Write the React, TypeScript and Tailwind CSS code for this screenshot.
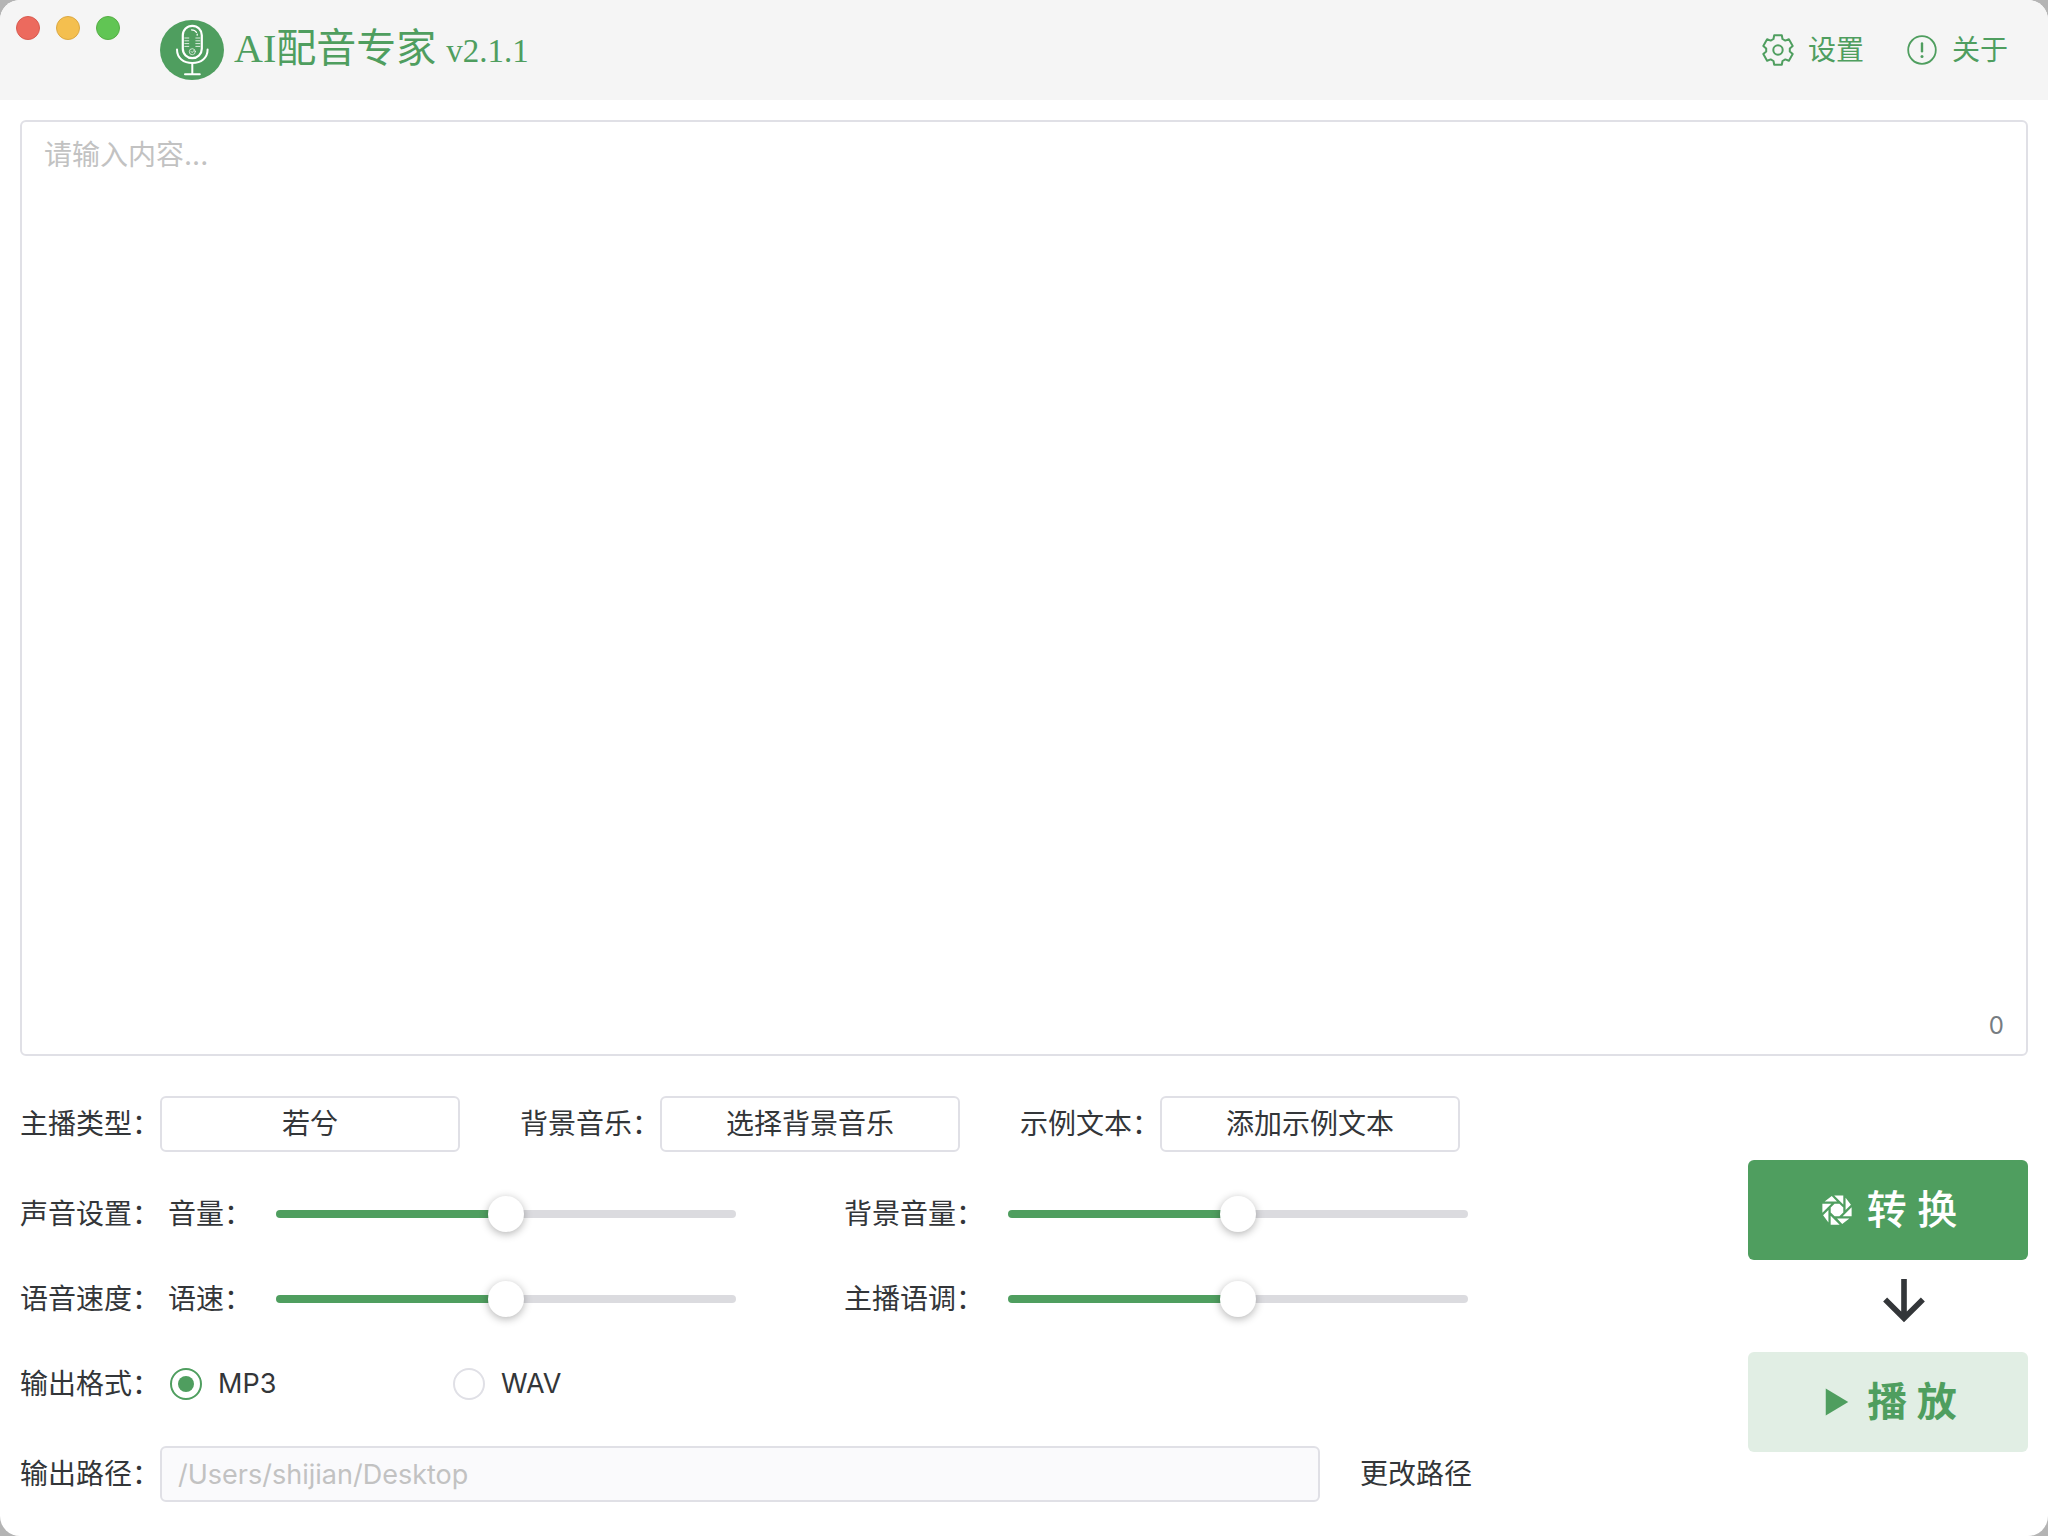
import { useState } from "react";
import type { ReactNode } from "react";
import { IoApertureSharp, IoArrowDownSharp, IoPlaySharp } from "react-icons/io5";

function LogoIcon() {
  return (
    <svg width="64" height="60" viewBox="0 0 64 60" fill="none" aria-hidden="true">
      <ellipse cx="32" cy="30" rx="32" ry="30" fill="#4f9e5f" />
      <g stroke="#fff" strokeLinecap="round">
        <rect x="22.8" y="5.8" width="19" height="32.4" rx="9.5" strokeWidth="2.2" />
        <path d="M17 29.5C17 38 23.5 43 32.3 43S47.6 38 47.6 29.5" strokeWidth="2" />
        <path d="M32.3 43v11M25 54.2h14.8" strokeWidth="2" />
        <path
          d="M24.8 18h4M24.8 20.8h4M24.8 23.6h4M24.8 26.4h4M35.8 18h4M35.8 20.8h4M35.8 23.6h4M35.8 26.4h4"
          strokeWidth="0.8"
        />
        <path d="M31.5 9.8c2.4 0 4 .9 5 2.6M37.2 14v1.2" strokeWidth="1.2" />
        <circle cx="32.3" cy="31.7" r="3" strokeWidth="0.7" />
        <path d="M31 31.4l1.2 1.2 1.8-2.2" strokeWidth="0.7" />
      </g>
    </svg>
  );
}

function GearIcon() {
  return (
    <svg
      width="32"
      height="32"
      viewBox="-16 -16 32 32"
      fill="none"
      stroke="currentColor"
      strokeWidth="2"
      strokeLinejoin="round"
      aria-hidden="true"
    >
      <path d="M-4.5-11-3.8-14.8H3.8L4.5-11 7.3-9.4 10.9-10.7 14.7-4.1 11.8-1.6V1.6L14.7 4.1 10.9 10.7 7.3 9.4 4.5 11 3.8 14.8H-3.8L-4.5 11-7.3 9.4-10.9 10.7-14.7 4.1-11.8 1.6V-1.6L-14.7-4.1-10.9-10.7-7.3-9.4Z" />
      <circle r="4.7" />
    </svg>
  );
}

function AboutIcon() {
  return (
    <svg width="32" height="32" viewBox="0 0 32 32" fill="none" aria-hidden="true">
      <circle cx="16" cy="16" r="13.8" stroke="currentColor" strokeWidth="1.8" />
      <path d="M16 9.4v7.8" stroke="currentColor" strokeWidth="2.4" strokeLinecap="round" />
      <circle cx="16" cy="22.4" r="1.5" fill="currentColor" />
    </svg>
  );
}

function FieldLabel({ htmlFor, children }: { htmlFor?: string; children: ReactNode }) {
  if (!htmlFor) return <span className="shrink-0">{children}</span>;
  return (
    <label htmlFor={htmlFor} className="shrink-0">
      {children}
    </label>
  );
}

type PickerProps = {
  id: string;
  label: string;
  value: string;
};

function Picker({ id, label, value }: PickerProps) {
  return (
    <div className="flex items-center">
      <FieldLabel htmlFor={id}>{label}</FieldLabel>
      <button id={id} type="button" className="h-14 w-[300px] rounded-md border-2 border-[#e0e0e6] bg-white">
        {value}
      </button>
    </div>
  );
}

function Slider({ id, label }: { id: string; label: string }) {
  const [value, setValue] = useState(50);

  return (
    <div className="flex items-center gap-6">
      <FieldLabel htmlFor={id}>{label}</FieldLabel>
      <input
        id={id}
        type="range"
        min={0}
        max={100}
        value={value}
        onChange={(e) => setValue(Number(e.target.value))}
        className="h-2 w-[460px] cursor-pointer appearance-none rounded-full outline-none [&::-webkit-slider-thumb]:size-9 [&::-webkit-slider-thumb]:appearance-none [&::-webkit-slider-thumb]:rounded-full [&::-webkit-slider-thumb]:bg-white [&::-webkit-slider-thumb]:shadow-[0_2px_8px_rgba(0,0,0,0.3)]"
        style={{ background: `linear-gradient(to right, #4f9e5f ${value}%, #dbdbdf ${value}%)` }}
      />
    </div>
  );
}

type FormatRadioProps = {
  value: string;
  current: string;
  onSelect: (value: string) => void;
};

function FormatRadio({ value, current, onSelect }: FormatRadioProps) {
  return (
    <label className="flex w-[283px] items-center gap-4 text-[27px]">
      <input
        type="radio"
        name="format"
        value={value}
        checked={current === value}
        onChange={() => onSelect(value)}
        className="grid size-8 appearance-none place-items-center rounded-full border-2 border-[#e0e0e6] bg-white before:size-4 before:rounded-full checked:border-[#4f9e5f] checked:before:bg-[#4f9e5f]"
      />
      {value}
    </label>
  );
}

export default function App() {
  const [text, setText] = useState("");
  const [format, setFormat] = useState("MP3");

  return (
    <div lang="zh-CN" className="bg-[#b4b4b4]">
      <div className="flex min-h-screen flex-col overflow-hidden rounded-[20px] bg-white font-['Inter','Noto_Sans_CJK_SC',sans-serif] text-[28px] leading-10 text-[#333639]">
        <header className="flex h-[100px] shrink-0 items-center bg-[#f5f5f5] pr-10 text-[#4f9e5f]">
          <div className="mt-4 ml-4 flex gap-4 self-start">
            <button type="button" aria-label="关闭" className="size-6 rounded-full border border-[#d85b50] bg-[#ec6a5e]" />
            <button type="button" aria-label="最小化" className="size-6 rounded-full border border-[#dba843] bg-[#f4bf4f]" />
            <button type="button" aria-label="缩放" className="size-6 rounded-full border border-[#56ae45] bg-[#61c554]" />
          </div>
          <div className="ml-10 flex items-center gap-[10px]">
            <LogoIcon />
            <h1 className="flex items-baseline gap-[10px] font-['Liberation_Serif','Noto_Sans_CJK_SC',serif] text-[40px] leading-[60px]">
              AI配音专家
              <span className="text-[33px]">v2.1.1</span>
            </h1>
          </div>
          <nav className="ml-auto flex gap-[42px]">
            <button type="button" className="flex items-center gap-[14px]">
              <GearIcon />
              设置
            </button>
            <button type="button" className="flex items-center gap-[14px]">
              <AboutIcon />
              关于
            </button>
          </nav>
        </header>

        <main className="flex flex-1 flex-col gap-10 px-5 pt-5 pb-[34px]">
          <div className="flex flex-1 flex-col rounded-md border-2 border-[#e0e0e6] px-[22px] pt-[13px] pb-2">
            <textarea
              aria-label="内容"
              placeholder="请输入内容..."
              value={text}
              onChange={(e) => setText(e.target.value)}
              className="w-full flex-1 resize-none outline-none placeholder:text-[#c2c2c2]"
            />
            <output className="self-end text-2xl leading-10 text-[#767c82]">{text.length}</output>
          </div>

          <div className="flex justify-between gap-10">
            <div className="flex max-w-[1452px] flex-1 flex-col gap-[34px]">
              <div className="flex gap-[60px]">
                <Picker id="voice" label="主播类型：" value="若兮" />
                <Picker id="music" label="背景音乐：" value="选择背景音乐" />
                <Picker id="sample" label="示例文本：" value="添加示例文本" />
              </div>

              <div className="flex flex-col gap-[29px]">
                <div className="flex h-14 items-center">
                  <FieldLabel>声音设置：</FieldLabel>
                  <div className="ml-2 flex gap-[108px]">
                    <Slider id="volume" label="音量：" />
                    <Slider id="music-volume" label="背景音量：" />
                  </div>
                </div>
                <div className="flex h-14 items-center">
                  <FieldLabel>语音速度：</FieldLabel>
                  <div className="ml-2 flex gap-[108px]">
                    <Slider id="speed" label="语速：" />
                    <Slider id="pitch" label="主播语调：" />
                  </div>
                </div>
                <div className="flex h-14 items-center">
                  <FieldLabel>输出格式：</FieldLabel>
                  <div className="ml-[10px] flex">
                    <FormatRadio value="MP3" current={format} onSelect={setFormat} />
                    <FormatRadio value="WAV" current={format} onSelect={setFormat} />
                  </div>
                </div>
              </div>

              <div className="flex items-center">
                <FieldLabel htmlFor="path">输出路径：</FieldLabel>
                <input
                  id="path"
                  type="text"
                  disabled
                  value="/Users/shijian/Desktop"
                  className="h-14 min-w-0 flex-1 rounded-md border-2 border-[#e0e0e6] bg-[#fafafc] px-4 text-[27px] text-[#c2c2c2]"
                />
                <button type="button" className="ml-10 shrink-0">
                  更改路径
                </button>
              </div>
            </div>

            <div className="flex w-[280px] flex-col pt-16 text-[40px] leading-[60px]">
              <button
                type="button"
                className="flex h-[100px] items-center justify-center gap-3 rounded-md bg-[#4f9e5f] font-medium text-white"
              >
                <IoApertureSharp size={36} />
                转 换
              </button>
              <IoArrowDownSharp size={60} className="mt-[10px] mb-[22px] ml-8 self-center" />
              <button
                type="button"
                className="flex h-[100px] items-center justify-center gap-3 rounded-md bg-[#e1eee4] font-bold text-[#4f9e5f]"
              >
                <IoPlaySharp size={36} />
                播 放
              </button>
            </div>
          </div>
        </main>
      </div>
    </div>
  );
}
